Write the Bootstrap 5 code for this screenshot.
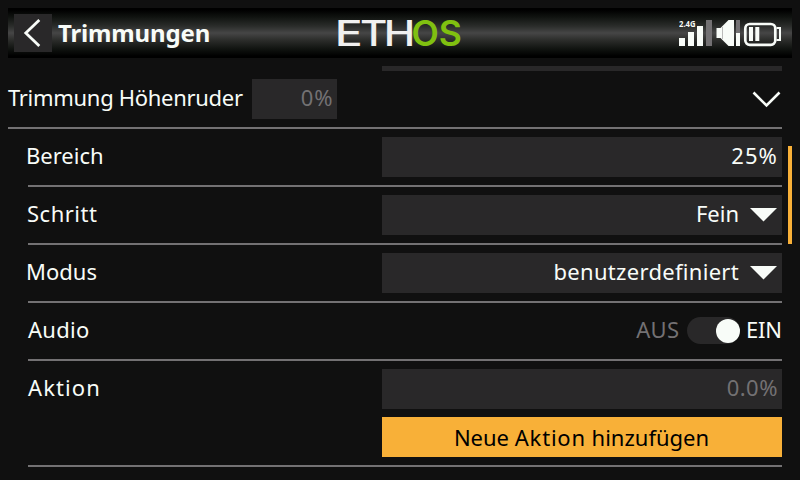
<!DOCTYPE html>
<html lang="de" data-bs-theme="dark">
<head>
<meta charset="utf-8">
<meta name="viewport" content="width=device-width, initial-scale=1">
<title>Trimmungen</title>
<link href="https://cdn.jsdelivr.net/npm/bootstrap@5.3.0/dist/css/bootstrap.min.css" rel="stylesheet">
<script src="https://cdn.jsdelivr.net/npm/bootstrap@5.3.0/dist/js/bootstrap.bundle.min.js" defer></script>
<style>
  body { width: 800px; height: 480px; background: #101010; color: #f8fcf8; font: 22px/37px "Noto Sans", sans-serif; }
  .topbar { height: 50px; margin: 8px 8px 0; background: linear-gradient(#000 0 4%, #101310 18%, #2a2c2a 36%, #464646 50%, #2c2d2b 64%, #101310 82%, #000 96%); }
  .back { width: 38px; height: 38px; margin-left: 6px; background: #292829; border: 0; }
  .title { font-weight: 700; font-size: 24px; line-height: 47px; margin-left: 6px; letter-spacing: -.15px; padding-bottom: 1px; }
  .status { width: 104px; margin-right: 9px; }
  .brand { left: 324px; top: 0; }
  .content { margin: 8px 18px 0 8px; }
  .clipped { height: 5px; width: 400px; background: #292829; }
  .setting { padding: 8px 0; border-bottom: 2px solid #737173; }
  .heading { padding-bottom: 3px; letter-spacing: -.3px; }
  .sub { margin-left: 20px; }
  .sub > .name { margin-left: -2px; }
  .sub > .inset { margin-left: -1px; }
  .sub > .flush { margin-left: 0; }
  .field { height: 40px; width: 400px; background: #292829; padding-right: 4px; }
  .small-field { width: 85px; margin-left: 9.500px; padding-right: 3.500px; }
  .dim { color: #737173; }
  .arrow { margin: 0 1px 0 11px; }
  .chevron { margin-bottom: 2px; }
  .action { height: 40px; width: 400px; border: 0; background: #f8b038; color: #000; line-height: 40px; padding: 0 1px 0 0; }
  .toggle { height: 40px; }
  .switch-track { width: 53px; height: 27px; background: #292829; border-radius: 14px; margin: 0 5.500px 1px 8px; padding-right: .5px; }
  .knob { width: 24px; height: 24px; background: #f8fcf8; border-radius: 50%; }
  .scroll-thumb { left: 788px; top: 146px; width: 4px; height: 98px; background: #f8b038; }
  .s1 { letter-spacing: .5px; } .s2 { letter-spacing: 1.1px; } .s3 { letter-spacing: .8px; } .s0 { letter-spacing: .3px; }
  .on { letter-spacing: -.1px; }
</style>
</head>
<body class="overflow-hidden position-relative m-0">
<header class="topbar d-flex align-items-center position-relative">
  <button class="back p-0 d-flex" aria-label="Zurück">
    <svg width="38" height="38" fill="none" stroke="#f8fcf8" stroke-width="2.8"><path d="M25.3 6 11.8 19 25.3 32"/></svg>
  </button>
  <div class="title">Trimmungen</div>
  <svg class="brand position-absolute" width="140" height="50" font-family="Inter" font-weight="600" font-size="35" fill="#f0f0f0">
    <text y="37.800" font-weight="500"><tspan x="2.800" textLength="28" lengthAdjust="spacingAndGlyphs">E</tspan><tspan x="28" textLength="27.400" lengthAdjust="spacingAndGlyphs">T</tspan><tspan x="51.700" textLength="31.500" lengthAdjust="spacingAndGlyphs">H</tspan></text>
    <text y="37.800" x="79.500" textLength="50.500" lengthAdjust="spacingAndGlyphs" fill="#80c010">OS</text>
  </svg>
  <svg class="status ms-auto" width="104" height="50" fill="#f8fcf8">
    <text x="0" y="18.600" font-family="Open Sans" font-weight="700" font-size="8.500" textLength="16.500" lengthAdjust="spacingAndGlyphs">2.4G</text>
    <path d="M0 30h6v8H0zM9 24h6v14H9zM18 18h6v20h-6z"/>
    <path fill="#737173" d="M27 12h6v26h-6zM57 12h4v13h-4z"/>
    <path d="M37.500 20h4l8-8H55v26h-5.500l-8-8h-4z"/>
    <path d="M43.500 19v12" stroke="#aaa" stroke-width=".8"/>
    <path d="M57 25h4v13h-4zM70 19h4v14h-4zM76.300 19h4v14h-4z"/>
    <rect x="66.300" y="16" width="30" height="20.800" rx="4.500" fill="none" stroke="#f8fcf8" stroke-width="2.700"/>
    <path d="M97.500 20h3.500v12h-3.500" fill="none" stroke="#f8fcf8" stroke-width="2"/>
  </svg>
</header>

<main class="content">
  <div class="clipped ms-auto"></div>
  <div class="setting d-flex align-items-center">
    <div class="heading">Trimmung Höhenruder</div>
    <div class="field small-field dim text-end s2">0%</div>
    <svg class="chevron ms-auto" width="30" height="20" fill="none" stroke="#f8fcf8" stroke-width="2.600"><path d="M1.500 4.500 14.500 17.500 27.500 4.500"/></svg>
  </div>
  <div class="setting sub d-flex justify-content-between">
    <div class="name">Bereich</div>
    <div class="field text-end s2">25%</div>
  </div>
  <div class="setting sub d-flex justify-content-between">
    <div class="name inset s1">Schritt</div>
    <div class="field d-flex justify-content-end"><span>Fein</span><svg class="arrow" width="27" height="40" fill="#f8fcf8"><path d="M0 13h27L13.500 26.500z"/></svg></div>
  </div>
  <div class="setting sub d-flex justify-content-between">
    <div class="name">Modus</div>
    <div class="field d-flex justify-content-end"><span class="s0">benutzerdefiniert</span><svg class="arrow" width="27" height="40" fill="#f8fcf8"><path d="M0 13h27L13.500 26.500z"/></svg></div>
  </div>
  <div class="setting sub d-flex justify-content-between">
    <div class="name flush s0">Audio</div>
    <div class="toggle d-flex align-items-center">
      <span class="dim s0 pb-1">AUS</span>
      <div class="switch-track d-flex align-items-center justify-content-end"><div class="knob"></div></div>
      <span class="on pb-1">EIN</span>
    </div>
  </div>
  <div class="setting sub d-flex justify-content-between">
    <div class="name flush s2">Aktion</div>
    <div class="d-flex flex-column gap-2">
      <div class="field dim text-end s1">0.0%</div>
      <button class="action text-center">Neue <span class="s3">Aktion</span> hinzufügen</button>
    </div>
  </div>
</main>
<div class="scroll-thumb position-absolute"></div>
</body>
</html>
